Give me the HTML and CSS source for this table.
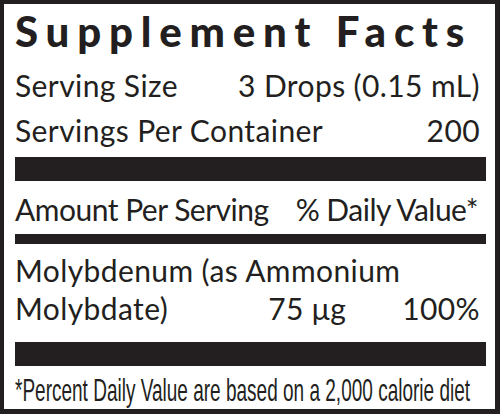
FILE: index.html
```html
<!DOCTYPE html>
<html>

<head>
    <title>Supplement Facts</title>
    <meta name="viewport" content="width=device-width, initial-scale=1">
    <link rel="stylesheet" href="styles.css">
</head>

<body>
    <div class="facts">
        <h1 class="title">Supplement Facts</h1>

        <div class="row">
            <span>Serving Size</span>
            <span>3 Drops (0.15 mL)</span>
        </div>
        <div class="row">
            <span>Servings Per Container</span>
            <span>200</span>
        </div>

        <div class="bar bar-thick bar-first"></div>

        <div class="row row-head">
            <span>Amount Per Serving</span>
            <span>% Daily Value*</span>
        </div>

        <div class="bar bar-medium"></div>

        <div class="nutrient">
            <div class="nutrient-name">Molybdenum (as Ammonium<br>Molybdate)</div>
            <div class="nutrient-amount">75 μg</div>
            <div class="nutrient-dv">100%</div>
        </div>

        <div class="bar bar-thick bar-last"></div>

        <div class="footnote">
            <span>*Percent Daily Value are based on a 2,000 calorie diet</span>
        </div>
    </div>
</body>

</html>
```

FILE: styles.css
```css
body {
    margin: 0;
    background: white;
}

.facts {
    width: 500px;
    height: 414px;
    box-sizing: border-box;
    border: 4px solid #231f20;
    border-right-width: 5px;
    border-bottom-width: 5px;
    padding: 0 9px 0 11px;
    font-family: Lato, "Open Sans", sans-serif;
    color: #231f20;
    overflow: hidden;
}

.title {
    margin: 0;
    padding-bottom: 4px;
    font-size: 42px;
    font-weight: 900;
    line-height: 55px;
    letter-spacing: 7.8px;
    white-space: nowrap;
}

.row {
    display: flex;
    justify-content: space-between;
    font-size: 30px;
    line-height: 45px;
    padding-right: 6px;
    letter-spacing: 0.4px;
    white-space: nowrap;
}

.row-head {
    padding-top: 3px;
    line-height: 50px;
    padding-right: 8px;
    letter-spacing: -0.5px;
}

.bar {
    background: #231f20;
}

.bar-thick {
    height: 24px;
}

.bar-first {
    margin-top: 4px;
}

.bar-medium {
    height: 10px;
}

.bar-last {
    margin-top: 15px;
}

.nutrient {
    display: grid;
    grid-template-columns: 1fr auto auto;
    align-items: end;
    margin-top: 7px;
    font-size: 30px;
    line-height: 38px;
    padding-right: 6px;
    letter-spacing: 0.4px;
    white-space: nowrap;
}

.nutrient-name {
    grid-column: 1 / 4;
    grid-row: 1;
}

.nutrient-amount {
    grid-column: 2;
    grid-row: 1;
    margin-right: 56px;
}

.nutrient-dv {
    grid-column: 3;
    grid-row: 1;
}

.footnote {
    padding-top: 3px;
    font-family: "Liberation Sans", Arial, sans-serif;
    font-size: 32px;
    line-height: 42px;
    white-space: nowrap;
}

.footnote span {
    display: inline-block;
    transform: scaleX(0.594);
    transform-origin: left center;
}
```
